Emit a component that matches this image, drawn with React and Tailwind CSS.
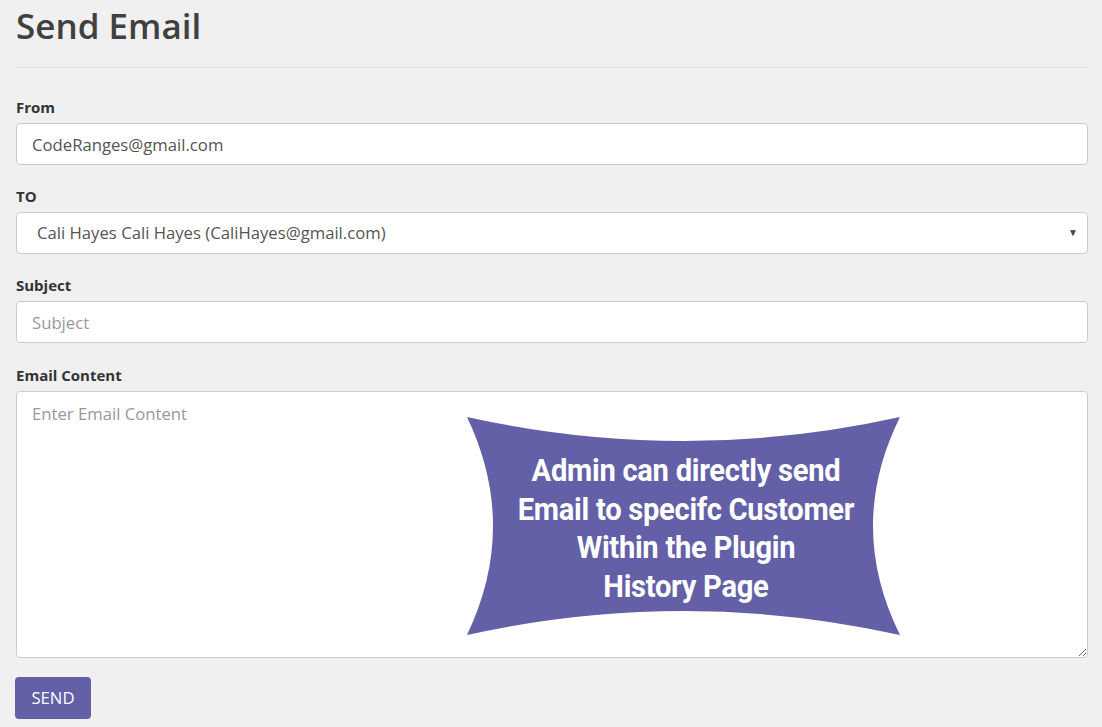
export default function App() {
  return (
    <div className="min-h-screen bg-[#f0f0f0] pl-[16px] pr-[14px] pt-[2px] pb-6 font-['Open_Sans',sans-serif] text-[#333]">
      <h1 className="text-[35px] font-semibold leading-[48px] text-[#404040]">Send Email</h1>
      <hr className="mt-[17px] border-0 border-t border-[#e2e2e2]" />

      <div className="mt-[29px]">
        <label className="block text-[15px] font-bold leading-[20px] text-[#333]">From</label>
        <input
          className="mt-[6px] block h-[42px] w-full rounded-[4px] border border-[#ccc] bg-white px-[15px] text-[16.7px] text-[#555] outline-none"
          defaultValue="CodeRanges@gmail.com"
        />
      </div>

      <div className="mt-[21px]">
        <label className="block text-[15px] font-bold leading-[20px] text-[#333]">TO</label>
        <div className="relative mt-[6px]">
          <div className="flex h-[42px] w-full items-center rounded-[4px] border border-[#ccc] bg-white pl-[20px] text-[16.7px] text-[#555]">
            Cali Hayes Cali Hayes (CaliHayes@gmail.com)
          </div>
          <span className="absolute right-[10px] top-[15px] text-[10px] leading-none text-[#444]">▼</span>
        </div>
      </div>

      <div className="mt-[21px]">
        <label className="block text-[15px] font-bold leading-[20px] text-[#333]">Subject</label>
        <input
          className="mt-[6px] block h-[42px] w-full rounded-[4px] border border-[#ccc] bg-white px-[15px] text-[16.7px] text-[#555] placeholder:text-[#999] outline-none"
          placeholder="Subject"
        />
      </div>

      <div className="mt-[22px]">
        <label className="block text-[15px] font-bold leading-[20px] text-[#333]">Email Content</label>
        <div className="relative mt-[6px]">
          <textarea
            className="block h-[267px] w-full resize-y rounded-[4px] border border-[#ccc] bg-white px-[15px] py-[9px] text-[16.7px] text-[#555] placeholder:text-[#999] outline-none"
            placeholder="Enter Email Content"
          />
          <div className="absolute left-[451px] top-[26px] flex h-[218px] w-[433px] items-center justify-center">
            <svg className="absolute inset-0" width="433" height="218" viewBox="0 0 433 218">
              <path d="M0 0 Q216.5 48 433 0 Q379 109 433 218 Q216.5 170 0 218 Q52 109 0 0 Z" fill="#6360a8" />
            </svg>
            <div className="relative ml-[4px] mt-[6px] scale-x-[0.94] text-center font-['Roboto',sans-serif] text-[31px] font-bold leading-[38.5px] tracking-[-0.3px] text-white">
              <div>Admin can directly send</div>
              <div>Email to specifc Customer</div>
              <div>Within the Plugin</div>
              <div>History Page</div>
            </div>
          </div>
        </div>
      </div>

      <button className="mt-[19px] h-[42px] w-[76px] -ml-px rounded-[4px] bg-[#6360a8] text-[16.7px] text-white">SEND</button>
    </div>
  );
}
